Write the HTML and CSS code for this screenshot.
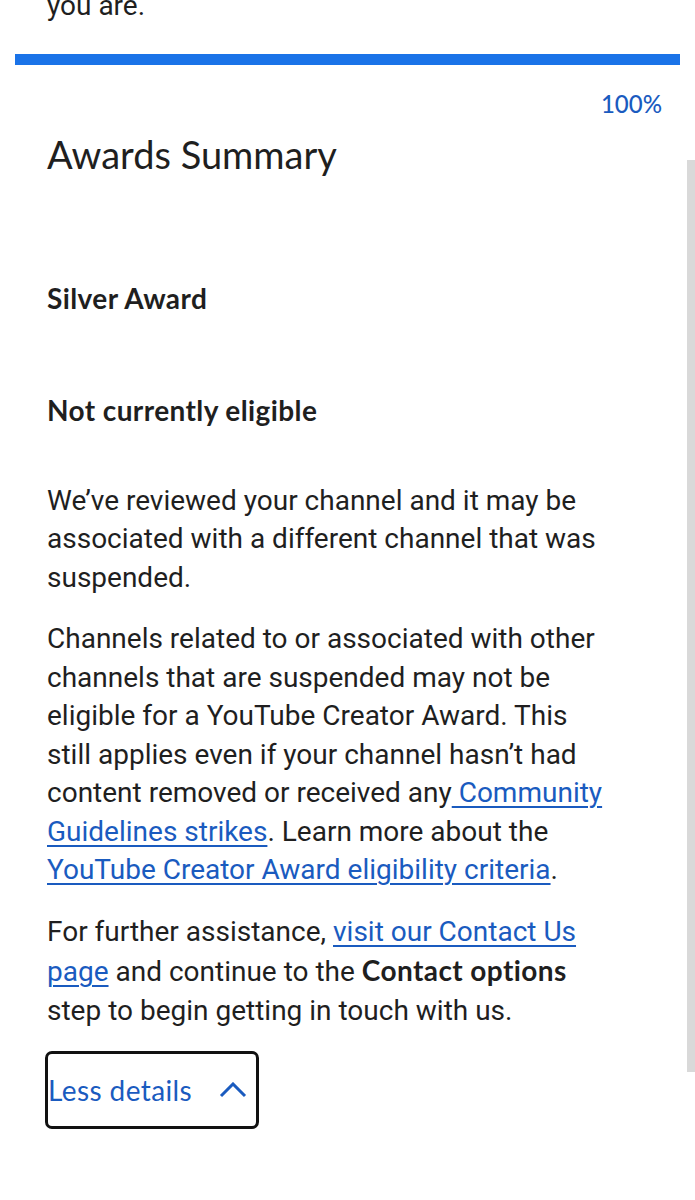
FILE: index.html
```html
<!DOCTYPE html>
<html lang="en">
<head>
  <meta charset="UTF-8" />
  <meta name="viewport" content="width=device-width, initial-scale=1.0" />
  <title>Awards Summary</title>
  <link rel="stylesheet" href="styles.css">
</head>
<body>

  <div class="page">
    <p class="prev">you are.</p>

    <div class="progress">
      <div class="progress-bar"></div>
    </div>
    <div class="percent">100%</div>

    <div class="content">
      <h1>Awards Summary</h1>

      <h2 class="award">Silver Award</h2>
      <h2 class="status">Not currently eligible</h2>

      <p>We’ve reviewed your channel and it may be associated with a different channel that was suspended.</p>

      <p>Channels related to or associated with other channels that are suspended may not be eligible for a YouTube Creator Award. This still applies even if your channel hasn’t had content removed or received any<a href="#"> Community Guidelines strikes</a>. Learn more about the <a href="#">YouTube Creator Award eligibility criteria</a>.</p>

      <p>For further assistance, <a href="#">visit our Contact Us page</a> and continue to the <b>Contact options</b> step to begin getting in touch with us.</p>

      <button class="toggle" type="button">
        Less details
        <svg width="28" height="16" viewBox="0 0 28 16"><path d="M2 14 L14 2 L26 14" fill="none" stroke="#1a5bbf" stroke-width="3"/></svg>
      </button>
    </div>
  </div>

  <div class="scrollbar"></div>

</body>
</html>
```

FILE: styles.css
```css
* { box-sizing: border-box; }
body {
  margin: 0;
  padding: 0;
  background: #fff;
  color: #1f1f1f;
  font-family: Roboto, "Liberation Sans", sans-serif;
  overflow: hidden;
}
.page { width: 680px; padding-left: 15px; }
.prev {
  margin: -13px 0 0 32px;
  font-size: 28px;
  line-height: 38.5px;
}
.progress { margin-top: 28px; height: 11px; background: #e8eaed; }
.progress-bar { width: 100%; height: 100%; background: #1a73e8; }
.percent {
  text-align: right;
  padding-right: 18px;
  margin-top: 24px;
  font-family: Lato, "Open Sans", sans-serif;
  font-size: 24px;
  font-weight: 500;
  line-height: 30px;
  color: #1a5bbf;
}
.content { width: 624px; padding: 0 32px; }
h1 {
  margin: 10px 0 0;
  font-family: Lato, "Open Sans", sans-serif;
  font-weight: 400;
  font-size: 38px;
  line-height: 50px;
}
h2 {
  margin: 0;
  font-family: Lato, "Open Sans", sans-serif;
  font-weight: 700;
  font-size: 28px;
  letter-spacing: 0.4px;
  line-height: 34px;
}
.award { margin-top: 102px; }
.status { margin-top: 78px; }
p {
  margin: 23px 0 0;
  font-size: 28px;
  line-height: 38.5px;
}
.status + p { margin-top: 55px; }
a {
  color: #1a5bbf;
  text-decoration-thickness: 2px;
  text-underline-offset: 4px;
}
b { font-family: Lato, "Open Sans", sans-serif; font-weight: 700; letter-spacing: 0.4px; }
.toggle {
  display: flex;
  align-items: center;
  gap: 27px;
  margin-top: 21px;
  margin-left: -2px;
  padding: 0 9px 0 0;
  height: 78px;
  border: 3px solid #111;
  border-radius: 7px;
  background: #fff;
  color: #1a5bbf;
  font-family: Lato, "Open Sans", sans-serif;
  font-size: 28px;
  letter-spacing: 0.4px;
  white-space: nowrap;
}
.toggle svg { flex: none; }
.scrollbar {
  position: fixed;
  right: 0;
  top: 160px;
  width: 8px;
  height: 912px;
  background: #d9d9d9;
}
```
